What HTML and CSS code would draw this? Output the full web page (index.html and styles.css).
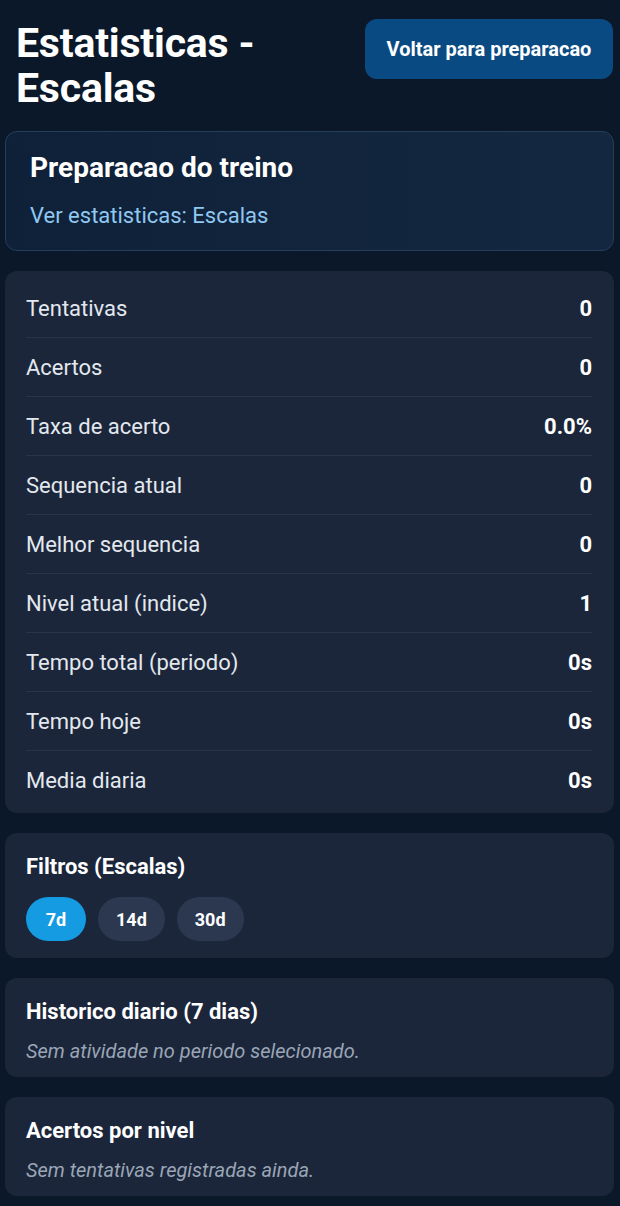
FILE: index.html
```html
<!DOCTYPE html>
<html lang="pt">
<head>
<meta charset="utf-8">
<title>Estatisticas - Escalas</title>
<link rel="stylesheet" href="styles.css">
</head>
<body>
<div class="page">
  <header class="top">
    <h1 class="title">Estatisticas -<br>Escalas</h1>
    <button class="back">Voltar para preparacao</button>
  </header>

  <section class="prep">
    <h2 class="prep-title">Preparacao do treino</h2>
    <div class="prep-sub">Ver estatisticas: Escalas</div>
  </section>

  <section class="card stats">
    <div class="row"><span class="label">Tentativas</span><span class="val">0</span></div>
    <div class="row"><span class="label">Acertos</span><span class="val">0</span></div>
    <div class="row"><span class="label">Taxa de acerto</span><span class="val">0.0%</span></div>
    <div class="row"><span class="label">Sequencia atual</span><span class="val">0</span></div>
    <div class="row"><span class="label">Melhor sequencia</span><span class="val">0</span></div>
    <div class="row"><span class="label">Nivel atual (indice)</span><span class="val">1</span></div>
    <div class="row"><span class="label">Tempo total (periodo)</span><span class="val">0s</span></div>
    <div class="row"><span class="label">Tempo hoje</span><span class="val">0s</span></div>
    <div class="row"><span class="label">Media diaria</span><span class="val">0s</span></div>
  </section>

  <section class="card block">
    <h3 class="block-title">Filtros (Escalas)</h3>
    <div class="pills">
      <button class="pill active">7d</button>
      <button class="pill">14d</button>
      <button class="pill">30d</button>
    </div>
  </section>

  <section class="card block">
    <h3 class="block-title">Historico diario (7 dias)</h3>
    <p class="empty">Sem atividade no periodo selecionado.</p>
  </section>

  <section class="card block">
    <h3 class="block-title">Acertos por nivel</h3>
    <p class="empty">Sem tentativas registradas ainda.</p>
  </section>
</div>
</body>
</html>
```

FILE: styles.css
```css
* { box-sizing: border-box; }
html, body {
  margin: 0;
  padding: 0;
}
body {
  background: #0b1829;
  font-family: Roboto, "Noto Sans", "Liberation Sans", sans-serif;
  color: #f2f5f9;
  min-height: 1206px;
}
.page {
  padding: 19px 6px 12px 5px;
  display: flex;
  flex-direction: column;
  gap: 20px;
}
.top {
  display: flex;
  justify-content: space-between;
  align-items: flex-start;
  padding-left: 11px;
}
.title {
  margin: 2px 0 0;
  font-size: 41px;
  line-height: 45px;
  font-weight: 700;
  color: #ffffff;
  letter-spacing: -0.2px;
}
.back {
  width: 248px;
  height: 60px;
  border: none;
  border-radius: 12px;
  background: #0a4a82;
  color: #ffffff;
  font-family: inherit;
  font-size: 20px;
  font-weight: 700;
  margin-right: 1px;
  padding: 0;
}
.prep {
  border: 1px solid #253e5c;
  border-radius: 12px;
  background: linear-gradient(90deg, #0f2139 0%, #132840 100%);
  padding: 19px 24px 20px;
}
.prep-title {
  margin: 0;
  font-size: 28px;
  line-height: 34px;
  font-weight: 700;
  color: #ffffff;
}
.prep-sub {
  margin-top: 17px;
  font-size: 22px;
  line-height: 28px;
  color: #8fc8f0;
}
.card {
  background: #1b263a;
  border-radius: 12px;
}
.stats {
  padding: 8px 22px 3px 21px;
}
.row {
  height: 59px;
  display: flex;
  justify-content: space-between;
  align-items: center;
  border-bottom: 1px solid #28344a;
}
.row:last-child { border-bottom: none; }
.label {
  font-size: 22px;
  color: #e3e8ef;
}
.val {
  font-size: 22px;
  font-weight: 700;
  color: #ffffff;
}
.block {
  padding: 21px 21px 13px;
}
.block-title {
  margin: 0;
  font-size: 22px;
  line-height: 26px;
  font-weight: 700;
  color: #ffffff;
}
.pills {
  display: flex;
  gap: 12px;
  margin: 17px 0 4px;
}
.pill {
  height: 44px;
  min-width: 60px;
  padding: 0 18px;
  border: none;
  border-radius: 22px;
  background: #2c3850;
  color: #ffffff;
  font-family: inherit;
  font-size: 18px;
  font-weight: 700;
}
.pill.active {
  background: #159be2;
}
.empty {
  margin: 13px 0 0;
  font-size: 20px;
  line-height: 26px;
  font-style: italic;
  color: #9aa5b6;
}
```
